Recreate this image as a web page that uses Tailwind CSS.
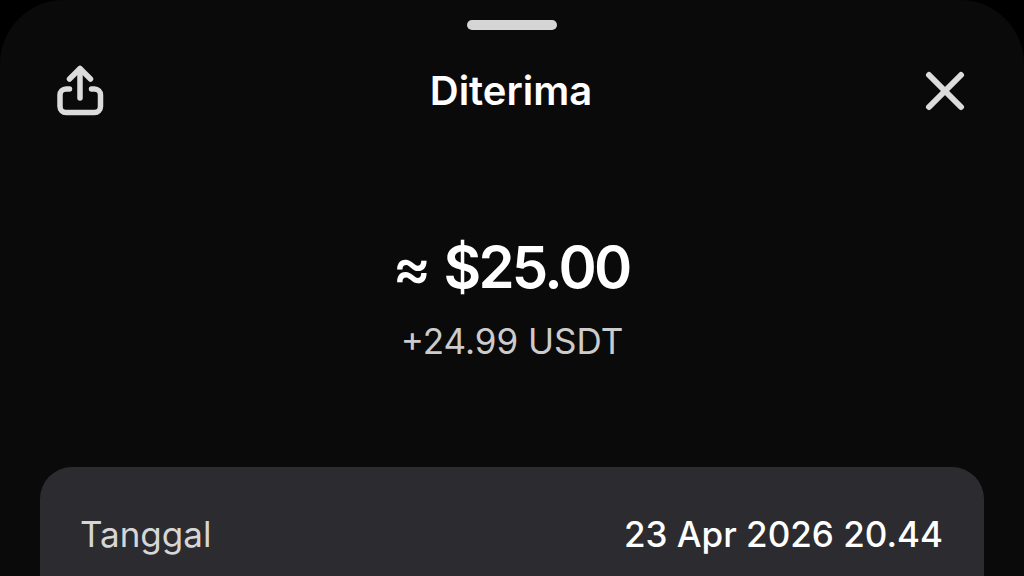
<!DOCTYPE html>
<html lang="en">
<head>
    <meta charset="UTF-8">
    <meta name="viewport" content="width=device-width, initial-scale=1.0">
    <title>Diterima</title>
    <script src="https://cdn.jsdelivr.net/npm/@tailwindcss/browser@4"></script>
</head>
<body class="bg-black h-[576px] overflow-hidden font-['Inter',sans-serif]">
    <div class="bg-[#0a0a0b] rounded-t-[64px] h-[576px] overflow-hidden">
        <div class="flex justify-center pt-[20px]">
            <div class="w-[90px] h-[10px] rounded-full bg-[#d4d5d4]"></div>
        </div>

        <div class="flex items-center justify-between h-[60px] mt-[31px] pl-[56px] pr-[59px]">
            <svg class="w-[48px] h-[52px] text-[#dcdcdc]" viewBox="0 0 48 52" fill="none" stroke="currentColor" stroke-width="5.500" stroke-linecap="round" stroke-linejoin="round">
                <path d="M13.500 24H10a6 6 0 0 0-6 6V41.500a6 6 0 0 0 6 6H38.500a6 6 0 0 0 6-6V30a6 6 0 0 0-6-6H35.500"/>
                <path d="M24 33V4"/>
                <path d="M13.500 14L24 3.500L34.500 14"/>
            </svg>
            <h1 class="text-[40px] font-semibold text-white leading-none mr-[7px]">Diterima</h1>
            <svg class="w-[40px] h-[40px] text-[#dcdcdc]" viewBox="0 0 40 40" fill="none" stroke="currentColor" stroke-width="6" stroke-linecap="round">
                <path d="M4 4L36 36"/>
                <path d="M36 4L4 36"/>
            </svg>
        </div>

        <div class="flex flex-col items-center mt-[113px]">
            <div class="text-[58px] font-semibold text-white leading-[66px] tracking-[-2.700px] mr-[2px]"><span class="font-medium mr-[3px]">≈</span> $25.00</div>
            <div class="text-[35px] text-[#cccccc] leading-[40px] mt-[21px]">+24.99 USDT</div>
        </div>

        <div class="mx-[40px] mt-[106px] bg-[#2c2c30] rounded-t-[32px] h-[200px] pl-[40px] pr-[41px] pt-[46px]">
            <div class="flex items-center justify-between leading-[42px]">
                <span class="text-[35px] text-[#d6d6d6]">Tanggal</span>
                <span class="text-[35px] font-medium text-white">23 Apr 2026 20.44</span>
            </div>
        </div>
    </div>
</body>
</html>
